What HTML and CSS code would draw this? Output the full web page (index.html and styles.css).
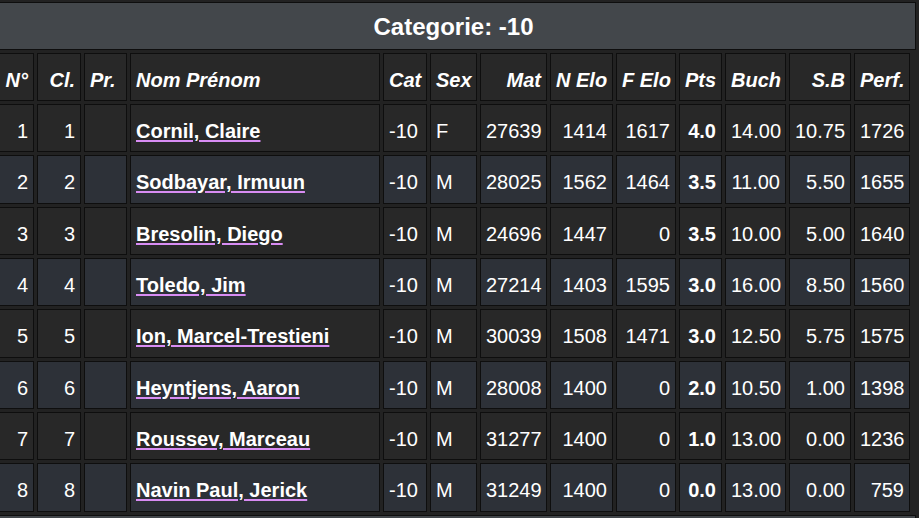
FILE: index.html
```html
<!DOCTYPE html>
<html lang="fr">

<head>
  <meta charset="UTF-8" />
  <meta name="viewport" content="width=device-width, initial-scale=1.0" />
  <title>Classement -10</title>
  <link rel="stylesheet" href="styles.css">
</head>

<body>
  <div class="category">
    <div class="category-title">Categorie: -10</div>
    <table class="standings">
      <thead>
        <tr>
          <th class="num c-no">N°</th>
          <th class="num c-cl">Cl.</th>
          <th class="c-pr">Pr.</th>
          <th class="c-name">Nom Prénom</th>
          <th class="c-cat">Cat</th>
          <th class="c-sex">Sex</th>
          <th class="num c-mat">Mat</th>
          <th class="num c-nelo">N Elo</th>
          <th class="num c-felo">F Elo</th>
          <th class="num c-pts">Pts</th>
          <th class="num c-buch">Buch</th>
          <th class="num c-sb">S.B</th>
          <th class="num c-perf">Perf.</th>
        </tr>
      </thead>
      <tbody>
        <tr>
          <td class="num">1</td><td class="num">1</td><td></td>
          <td><a href="#">Cornil, Claire</a></td>
          <td>-10</td><td>F</td>
          <td class="num">27639</td><td class="num">1414</td><td class="num">1617</td>
          <td class="num pts">4.0</td><td class="num">14.00</td><td class="num">10.75</td><td class="num">1726</td>
        </tr>
        <tr>
          <td class="num">2</td><td class="num">2</td><td></td>
          <td><a href="#">Sodbayar, Irmuun</a></td>
          <td>-10</td><td>M</td>
          <td class="num">28025</td><td class="num">1562</td><td class="num">1464</td>
          <td class="num pts">3.5</td><td class="num">11.00</td><td class="num">5.50</td><td class="num">1655</td>
        </tr>
        <tr>
          <td class="num">3</td><td class="num">3</td><td></td>
          <td><a href="#">Bresolin, Diego</a></td>
          <td>-10</td><td>M</td>
          <td class="num">24696</td><td class="num">1447</td><td class="num">0</td>
          <td class="num pts">3.5</td><td class="num">10.00</td><td class="num">5.00</td><td class="num">1640</td>
        </tr>
        <tr>
          <td class="num">4</td><td class="num">4</td><td></td>
          <td><a href="#">Toledo, Jim</a></td>
          <td>-10</td><td>M</td>
          <td class="num">27214</td><td class="num">1403</td><td class="num">1595</td>
          <td class="num pts">3.0</td><td class="num">16.00</td><td class="num">8.50</td><td class="num">1560</td>
        </tr>
        <tr>
          <td class="num">5</td><td class="num">5</td><td></td>
          <td><a href="#">Ion, Marcel-Trestieni</a></td>
          <td>-10</td><td>M</td>
          <td class="num">30039</td><td class="num">1508</td><td class="num">1471</td>
          <td class="num pts">3.0</td><td class="num">12.50</td><td class="num">5.75</td><td class="num">1575</td>
        </tr>
        <tr>
          <td class="num">6</td><td class="num">6</td><td></td>
          <td><a href="#">Heyntjens, Aaron</a></td>
          <td>-10</td><td>M</td>
          <td class="num">28008</td><td class="num">1400</td><td class="num">0</td>
          <td class="num pts">2.0</td><td class="num">10.50</td><td class="num">1.00</td><td class="num">1398</td>
        </tr>
        <tr>
          <td class="num">7</td><td class="num">7</td><td></td>
          <td><a href="#">Roussev, Marceau</a></td>
          <td>-10</td><td>M</td>
          <td class="num">31277</td><td class="num">1400</td><td class="num">0</td>
          <td class="num pts">1.0</td><td class="num">13.00</td><td class="num">0.00</td><td class="num">1236</td>
        </tr>
        <tr>
          <td class="num">8</td><td class="num">8</td><td></td>
          <td><a href="#">Navin Paul, Jerick</a></td>
          <td>-10</td><td>M</td>
          <td class="num">31249</td><td class="num">1400</td><td class="num">0</td>
          <td class="num pts">0.0</td><td class="num">13.00</td><td class="num">0.00</td><td class="num">759</td>
        </tr>
      </tbody>
    </table>
  </div>

  <div class="category">
    <div class="category-title next"></div>
  </div>
</body>

</html>
```

FILE: styles.css
```css
body {
  margin: 0;
  background-color: #222;
  color: #fff;
  font-family: "Liberation Sans", Arial, sans-serif;
  font-size: 20px;
  overflow: hidden;
}

.category {
  margin: 2px 0 0 -9px;
  width: 925px;
}

.category + .category {
  margin-top: 0;
}

.category-title {
  background-color: #43474b;
  border: 1px solid #0e0e0e;
  padding: 10px 0 8px;
  line-height: 28px;
  font-size: 24px;
  font-weight: bold;
  text-align: center;
}

.category-title.next {
  height: 28px;
}

.standings {
  width: 922px;
  table-layout: fixed;
  border-collapse: separate;
  border-spacing: 3px;
}

.standings th,
.standings td {
  box-sizing: border-box;
  border: 1px solid #0e0e0e;
  padding: 15px 5px 8px;
  line-height: 23px;
  vertical-align: top;
  text-align: left;
  white-space: nowrap;
  overflow: hidden;
}

.standings th {
  height: 48px;
  background-color: #282828;
  font-weight: bold;
  font-style: italic;
}

.standings td {
  height: 48.33px;
}

.standings tbody tr:nth-child(odd) td {
  background-color: #282828;
}

.standings tbody tr:nth-child(even) td {
  background-color: #2d3138;
}

.standings .num {
  text-align: right;
}

.standings .pts {
  font-weight: bold;
}

.standings a {
  color: #fff;
  font-weight: bold;
  text-decoration: underline;
  text-decoration-color: #d88cf3;
  text-decoration-thickness: 2px;
  text-underline-offset: 2px;
}

.c-no { width: 40px; }
.c-cl { width: 44px; }
.c-pr { width: 43px; }
.c-name { width: 250px; }
.c-cat { width: 44px; }
.c-sex { width: 47px; }
.c-mat { width: 67px; }
.c-nelo { width: 63px; }
.c-felo { width: 60px; }
.c-pts { width: 43px; }
.c-buch { width: 61px; }
.c-sb { width: 62px; }
.c-perf { width: 56px; }
```
